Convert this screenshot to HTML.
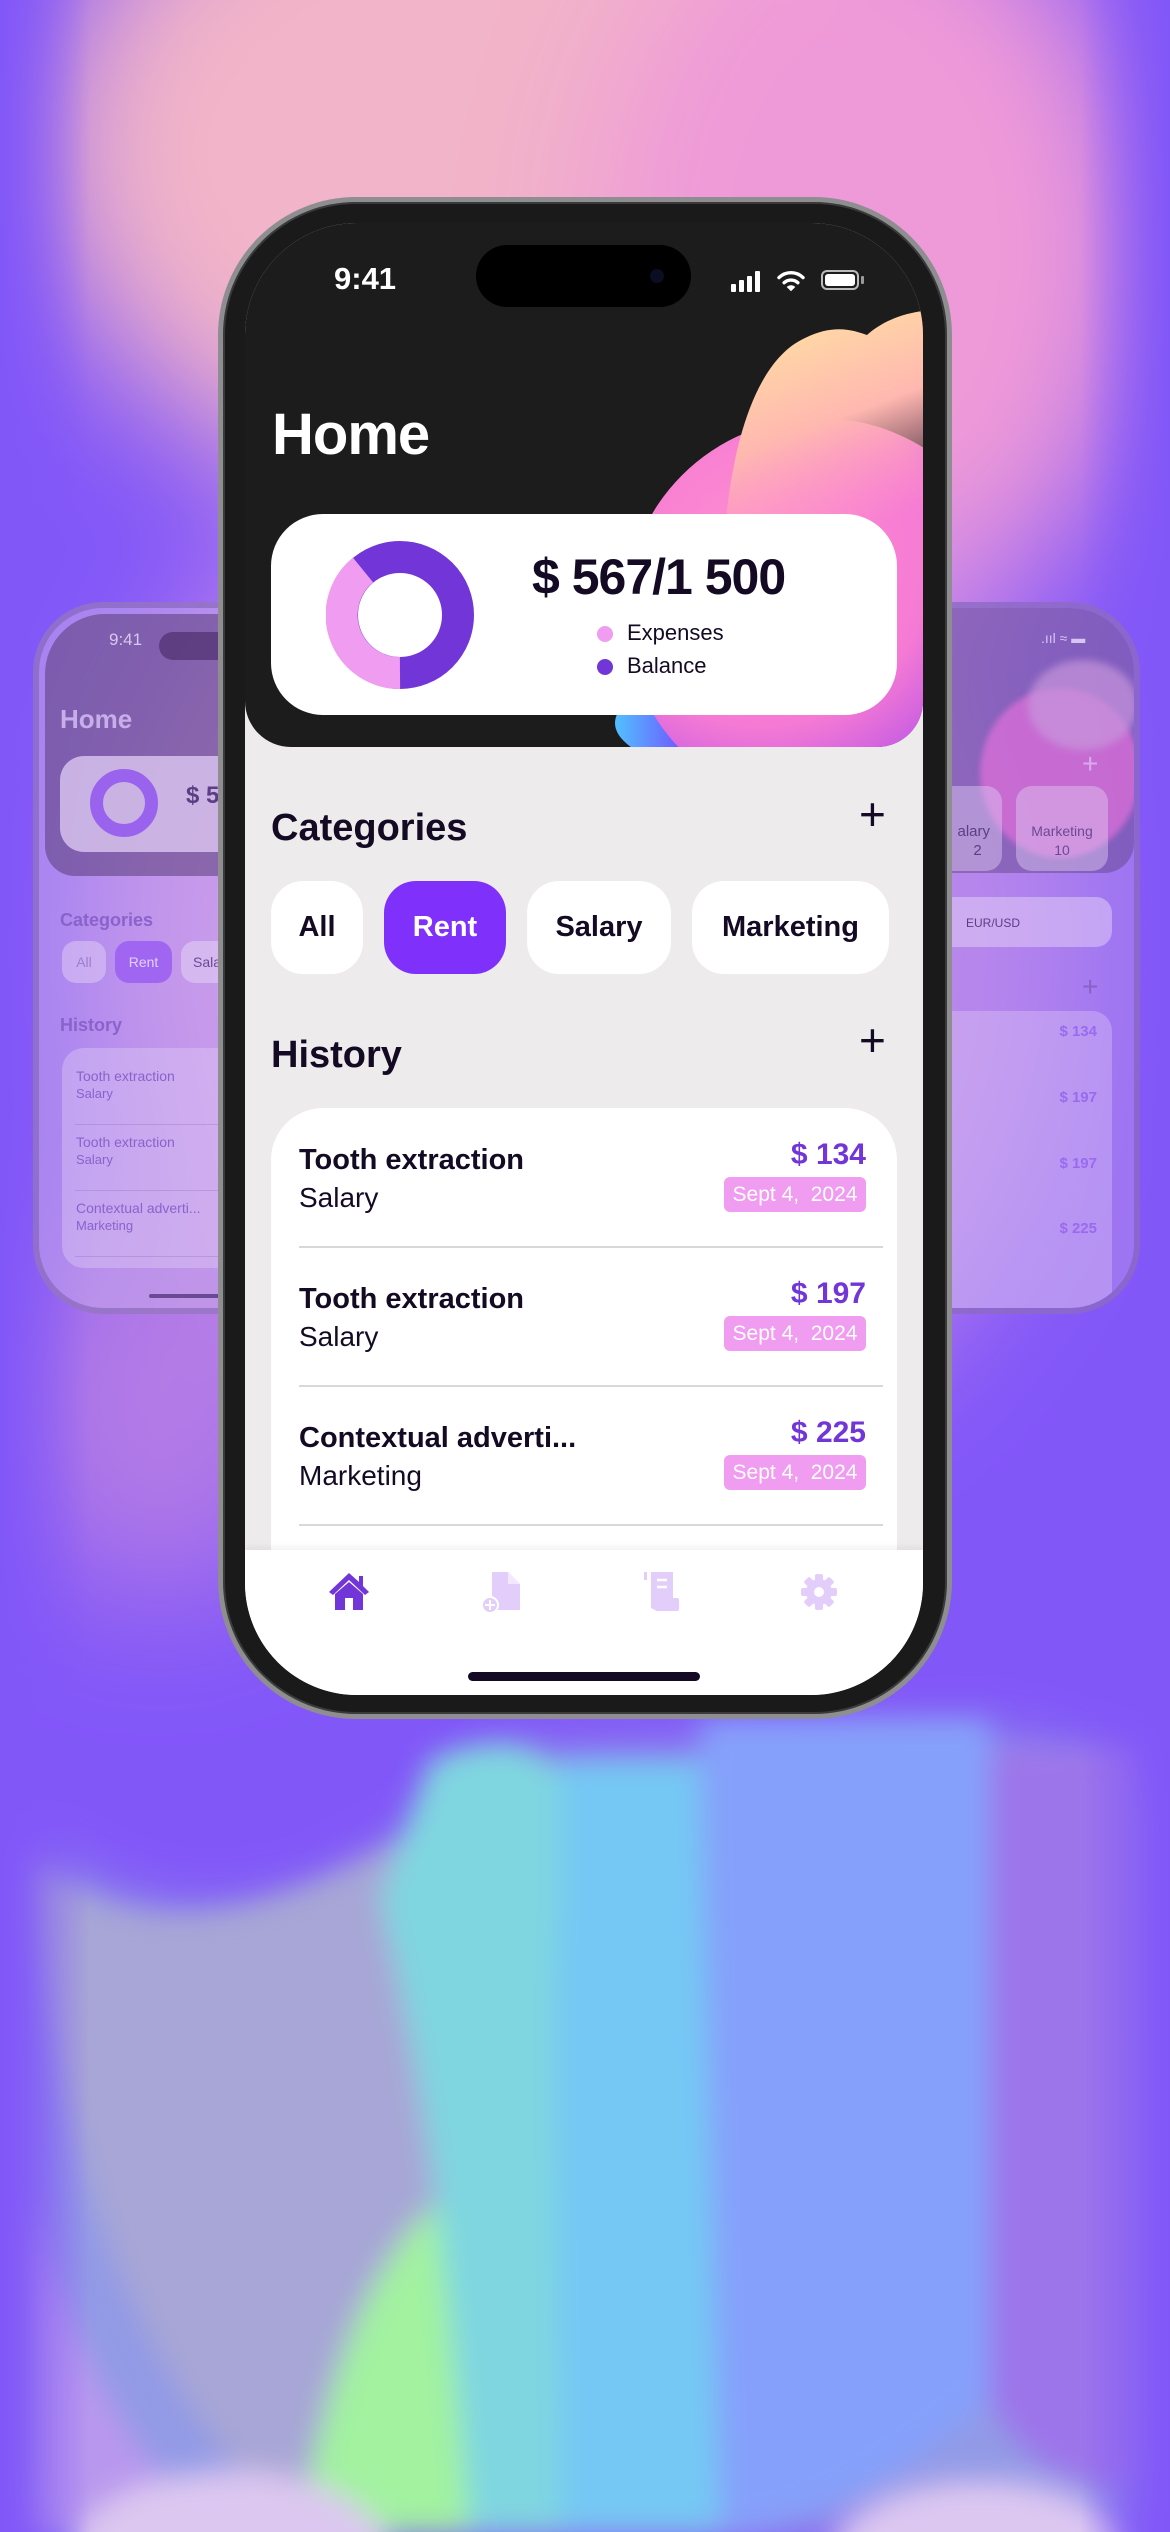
<!DOCTYPE html>
<html><head><meta charset="utf-8"><style>
*{margin:0;padding:0;box-sizing:border-box}
body{width:1170px;height:2532px;overflow:hidden;position:relative;font-family:"Liberation Sans",sans-serif;background:#8257f8}
.abs{position:absolute}
.t{color:#140a24}
</style></head><body>
<svg class="abs" style="left:0;top:0" width="1170" height="2532" viewBox="0 0 1170 2532">
<defs>
<filter id="b1" x="-50%" y="-50%" width="200%" height="200%"><feGaussianBlur stdDeviation="70"/></filter>
<filter id="b2" x="-50%" y="-50%" width="200%" height="200%"><feGaussianBlur stdDeviation="14"/></filter>
<filter id="b3" x="-50%" y="-50%" width="200%" height="200%"><feGaussianBlur stdDeviation="30"/></filter>
<linearGradient id="sideL" x1="0" x2="1"><stop offset="0" stop-color="#8257f8"/><stop offset="1" stop-color="#8257f8" stop-opacity="0"/></linearGradient>
<linearGradient id="sideR" x1="1" x2="0"><stop offset="0" stop-color="#8257f8"/><stop offset="1" stop-color="#8257f8" stop-opacity="0"/></linearGradient>
</defs>
<rect width="1170" height="2532" fill="#8257f8"/>
<g filter="url(#b1)">
<ellipse cx="560" cy="150" rx="520" ry="380" fill="#f2b4c8"/>
<ellipse cx="870" cy="250" rx="280" ry="380" fill="#ef9ad8"/>
<ellipse cx="585" cy="950" rx="480" ry="520" fill="#c98ae8"/>
<ellipse cx="160" cy="1400" rx="160" ry="200" fill="#b27ae6"/>
</g>
<g filter="url(#b3)">
<path d="M30 1850 C200 1980 380 1900 520 1760 L1000 1740 L1140 1780 L1140 2532 L30 2532Z" fill="#929ae6"/>
</g>
<g filter="url(#b2)">
<path d="M30 1860 C150 1960 300 1920 520 1760 L520 2532 L300 2532 C150 2400 60 2200 30 1860Z" fill="#a7a6d6"/>
<path d="M300 2532 C330 2350 380 2250 440 2200 L480 2532Z" fill="#a2f2a0"/>
<path d="M430 1760 C520 1720 560 1760 580 1800 L570 2532 L470 2532 C450 2300 430 2100 380 1900Z" fill="#7fd6e0"/>
<path d="M560 1760 L700 1760 L720 2532 L560 2532 C560 2300 550 2000 560 1900Z" fill="#74c8f4"/>
<path d="M700 1720 L990 1720 L990 2400 C900 2480 800 2532 720 2532Z" fill="#85a0fb"/>
<path d="M990 1750 L1140 1750 L1140 2480 C1080 2500 1020 2460 990 2400Z" fill="#9d74ea"/>
<path d="M30 2200 C80 2380 150 2480 230 2532 L30 2532Z" fill="#b898ee"/>
<ellipse cx="230" cy="2560" rx="160" ry="90" fill="#dcc7f0"/>
<ellipse cx="980" cy="2560" rx="150" ry="80" fill="#dcc7f0"/>
</g>
<rect x="0" y="0" width="90" height="2532" fill="url(#sideL)"/>
<rect x="1080" y="0" width="90" height="2532" fill="url(#sideR)"/>
</svg>

<!-- left side phone -->
<div class="abs" style="left:33px;top:602px;width:380px;height:712px;border-radius:70px;border:6px solid rgba(120,90,170,.5);background:rgba(200,170,235,.55);overflow:hidden">
 <div class="abs" style="left:6px;top:6px;right:6px;height:262px;background:rgba(90,60,120,.55);border-radius:60px 60px 30px 30px"></div>
 <div class="abs" style="left:70px;top:22px;font-size:17px;color:#d9c8ee">9:41</div>
 <div class="abs" style="left:120px;top:24px;width:120px;height:28px;border-radius:14px;background:rgba(70,40,100,.6)"></div>
 <div class="abs" style="left:21px;top:96px;font-size:26px;font-weight:bold;color:#c7aeea">Home</div>
 <div class="abs" style="left:21px;top:148px;width:320px;height:96px;border-radius:24px;background:rgba(225,205,245,.75)"></div>
 <div class="abs" style="left:51px;top:161px;width:68px;height:68px;border-radius:50%;border:13px solid #9a63ee"></div>
 <div class="abs" style="left:147px;top:174px;font-size:24px;font-weight:bold;color:#5b3e84">$ 5</div>
 <div class="abs" style="left:21px;top:302px;font-size:18px;font-weight:bold;color:#8a62cc">Categories</div>
 <div class="abs" style="left:23px;top:333px;width:44px;height:42px;border-radius:14px;background:rgba(225,205,245,.5);font-size:14px;color:#9b7fd0;text-align:center;line-height:42px">All</div>
 <div class="abs" style="left:76px;top:333px;width:57px;height:42px;border-radius:14px;background:#a066f2;font-size:14px;color:#e3d1fb;text-align:center;line-height:42px">Rent</div>
 <div class="abs" style="left:142px;top:333px;width:80px;height:42px;border-radius:14px;background:rgba(225,205,245,.6);font-size:14px;color:#6a4a94;line-height:42px;padding-left:12px">Salary</div>
 <div class="abs" style="left:21px;top:407px;font-size:18px;font-weight:bold;color:#8a62cc">History</div>
 <div class="abs" style="left:23px;top:440px;width:330px;height:220px;border-radius:22px;background:rgba(225,205,245,.4)"></div>
 <div class="abs" style="left:37px;top:460px;font-size:14px;color:#8a62cc;line-height:17px">Tooth extraction<br><span style="font-size:13px">Salary</span></div>
 <div class="abs" style="left:37px;top:526px;font-size:14px;color:#8a62cc;line-height:17px">Tooth extraction<br><span style="font-size:13px">Salary</span></div>
 <div class="abs" style="left:37px;top:592px;font-size:14px;color:#8a62cc;line-height:17px">Contextual adverti...<br><span style="font-size:13px">Marketing</span></div>
 <div class="abs" style="left:36px;top:516px;width:300px;height:1px;background:rgba(140,100,200,.3)"></div>
 <div class="abs" style="left:36px;top:582px;width:300px;height:1px;background:rgba(140,100,200,.3)"></div>
 <div class="abs" style="left:36px;top:648px;width:300px;height:1px;background:rgba(140,100,200,.3)"></div>
 <div class="abs" style="left:110px;top:686px;width:120px;height:4px;border-radius:2px;background:#6a4a94"></div>
</div>

<!-- right side phone -->
<div class="abs" style="left:760px;top:602px;width:380px;height:712px;border-radius:70px;border:6px solid rgba(120,90,170,.5);background:rgba(175,135,238,.6);overflow:hidden">
 <div class="abs" style="left:0;top:0;right:0;height:265px;background:rgba(100,70,140,.5);border-radius:64px 64px 30px 30px"></div>
 <div class="abs" style="left:214px;top:80px;width:160px;height:170px;border-radius:50%;background:rgba(215,110,215,.8);filter:blur(3px)"></div>
 <div class="abs" style="left:262px;top:52px;width:110px;height:90px;border-radius:50%;background:rgba(200,150,220,.7);filter:blur(4px)"></div>
 <div class="abs" style="left:275px;top:22px;font-size:14px;color:#d6c6f2">.ııl ≈ ▬</div>
 <div class="abs" style="left:316px;top:140px;font-size:28px;font-weight:200;color:rgba(230,210,250,.6)">+</div>
 <div class="abs" style="left:150px;top:178px;width:86px;height:85px;border-radius:16px;background:rgba(225,205,245,.45);font-size:15px;color:#5b3e84;text-align:right;padding:36px 12px 0 0;line-height:19px">alary<br>2&nbsp;&nbsp;</div>
 <div class="abs" style="left:250px;top:178px;width:92px;height:85px;border-radius:16px;background:rgba(225,205,245,.45);font-size:14px;color:#6a4a94;text-align:center;padding-top:36px;line-height:19px">Marketing<br>10</div>
 <div class="abs" style="left:0px;top:289px;width:346px;height:50px;border-radius:16px;background:rgba(230,210,248,.5);font-size:12px;color:#5b3e84;padding:19px 0 0 200px">EUR/USD</div>
 <div class="abs" style="left:316px;top:363px;font-size:28px;font-weight:200;color:rgba(120,80,170,.6)">+</div>
 <div class="abs" style="left:0px;top:403px;width:346px;height:320px;border-radius:20px;background:rgba(225,205,245,.35)"></div>
 <div class="abs" style="left:240px;top:414px;width:91px;text-align:right;font-size:15px;font-weight:bold;color:#9a6aee;line-height:20px">$ 134</div>
 <div class="abs" style="left:240px;top:480px;width:91px;text-align:right;font-size:15px;font-weight:bold;color:#9a6aee;line-height:20px">$ 197</div>
 <div class="abs" style="left:240px;top:546px;width:91px;text-align:right;font-size:15px;font-weight:bold;color:#9a6aee;line-height:20px">$ 197</div>
 <div class="abs" style="left:240px;top:611px;width:91px;text-align:right;font-size:15px;font-weight:bold;color:#9a6aee;line-height:20px">$ 225</div>
 <div class="abs" style="left:0px;top:686px;width:160px;height:4px;border-radius:2px;background:#6a4a94"></div>
</div>

<!-- main phone -->
<div class="abs" style="left:218px;top:197px;width:734px;height:1522px;border-radius:138px;background:#1a1a1a;border:5px solid #8e8e90;box-shadow:0 0 0 2px #3a3a3c inset"></div>
<div class="abs" style="left:245px;top:223px;width:678px;height:1472px;border-radius:112px;background:#edebec;overflow:hidden">
 <!-- header -->
 <div class="abs" style="left:0;top:0;width:678px;height:524px;background:#1c1c1c;border-radius:0 0 46px 46px;overflow:hidden">
  <svg class="abs" style="left:0;top:0" width="678" height="524">
   <defs>
    <radialGradient id="pk" cx="0.35" cy="0.35" r="0.8"><stop offset="0" stop-color="#ff8ed0"/><stop offset="0.55" stop-color="#f57ad4"/><stop offset="1" stop-color="#9a40f0"/></radialGradient>
    <linearGradient id="yl" x1="0" y1="0" x2="0.3" y2="1"><stop offset="0" stop-color="#ffe7a0"/><stop offset="0.55" stop-color="#ffb8b0"/><stop offset="1" stop-color="#ff9cc4" stop-opacity="0"/></linearGradient>
    <linearGradient id="bt" x1="0" y1="0" x2="1" y2="0"><stop offset="0" stop-color="#52c0ff"/><stop offset="0.25" stop-color="#7a2cff"/><stop offset="1" stop-color="#b052e8"/></linearGradient>
   </defs>
   <ellipse cx="560" cy="500" rx="190" ry="60" fill="url(#bt)"/>
   <circle cx="575" cy="390" r="195" fill="url(#pk)"/>
   <path d="M478 340 C482 240 505 140 560 115 C590 100 610 108 622 112 C640 96 662 90 678 88 L678 330 C620 300 540 310 478 340Z" fill="url(#yl)"/>
  </svg>
 </div>
 <div class="abs" style="left:89px;top:38px;font-size:31px;color:#fff;font-weight:600">9:41</div>
 <div class="abs" style="left:231px;top:22px;width:215px;height:62px;border-radius:31px;background:#000"></div>
 <div class="abs" style="left:405px;top:46px;width:14px;height:14px;border-radius:50%;background:#0b0d22"></div>
 <div class="abs" style="left:486px;top:61px;width:5px;height:8px;background:#fff;border-radius:1px"></div>
 <div class="abs" style="left:494px;top:57px;width:5px;height:12px;background:#fff;border-radius:1px"></div>
 <div class="abs" style="left:502px;top:53px;width:5px;height:16px;background:#fff;border-radius:1px"></div>
 <div class="abs" style="left:510px;top:48px;width:5px;height:21px;background:#fff;border-radius:1px"></div>
 <svg class="abs" style="left:532px;top:46px" width="28" height="24" viewBox="0 0 32 28"><path d="M2 10 A20 20 0 0 1 30 10" stroke="#fff" stroke-width="4" fill="none" stroke-linecap="round"/><path d="M8 16 A12 12 0 0 1 24 16" stroke="#fff" stroke-width="4" fill="none" stroke-linecap="round"/><path d="M16 26 L11 21 A7 7 0 0 1 21 21Z" fill="#fff"/></svg>
 <div class="abs" style="left:576px;top:47px;width:38px;height:20px;border-radius:6px;border:2px solid #bbb;padding:2px"><div style="width:100%;height:100%;background:#fff;border-radius:3px"></div></div>
 <div class="abs" style="left:616px;top:53px;width:3px;height:8px;background:#999;border-radius:1px"></div>

 <div class="abs" style="left:27px;top:178px;font-size:58px;font-weight:bold;color:#fff;letter-spacing:-1px">Home</div>
 <div class="abs" style="left:26px;top:291px;width:626px;height:201px;border-radius:52px;background:#fff"></div>
 <svg class="abs" style="left:81px;top:318px" width="148" height="148" viewBox="0 0 148 148">
  <circle cx="74" cy="74" r="58" fill="none" stroke="#7236d8" stroke-width="32"/>
  <path d="M74 132 A58 58 0 0 1 37 29" fill="none" stroke="#f09cf0" stroke-width="32"/>
 </svg>
 <div class="abs t" style="left:287px;top:325px;font-size:50px;font-weight:bold;letter-spacing:-1px">$ 567/1 500</div>
 <div class="abs" style="left:352px;top:403px;width:16px;height:16px;border-radius:50%;background:#f09cf0"></div>
 <div class="abs t" style="left:382px;top:397px;font-size:22px">Expenses</div>
 <div class="abs" style="left:352px;top:436px;width:16px;height:16px;border-radius:50%;background:#7236d8"></div>
 <div class="abs t" style="left:382px;top:430px;font-size:22px">Balance</div>

 <div class="abs t" style="left:26px;top:584px;font-size:38px;font-weight:bold">Categories</div>
 <div class="abs t" style="left:614px;top:568px;font-size:46px;font-weight:300;line-height:46px">+</div>
 <div class="abs t" style="left:26px;top:658px;width:92px;height:93px;border-radius:32px;background:#fff;font-size:29px;font-weight:600;text-align:center;line-height:93px">All</div>
 <div class="abs" style="left:139px;top:658px;width:122px;height:93px;border-radius:32px;background:#7f30fb;color:#fff;font-size:29px;font-weight:600;text-align:center;line-height:93px">Rent</div>
 <div class="abs t" style="left:282px;top:658px;width:144px;height:93px;border-radius:32px;background:#fff;font-size:29px;font-weight:600;text-align:center;line-height:93px">Salary</div>
 <div class="abs t" style="left:447px;top:658px;width:197px;height:93px;border-radius:32px;background:#fff;font-size:29px;font-weight:600;text-align:center;line-height:93px">Marketing</div>

 <div class="abs t" style="left:26px;top:811px;font-size:38px;font-weight:bold">History</div>
 <div class="abs t" style="left:614px;top:794px;font-size:46px;font-weight:300;line-height:46px">+</div>

 <div class="abs" style="left:26px;top:885px;width:626px;height:520px;border-radius:52px;background:#fff"></div>
 <div class="abs t" style="left:54px;top:920px;font-size:29px;font-weight:bold;line-height:34px">Tooth extraction</div>
 <div class="abs t" style="left:54px;top:958px;font-size:28px;line-height:34px">Salary</div>
 <div class="abs" style="left:421px;top:915px;width:200px;text-align:right;font-size:30px;font-weight:bold;color:#7236d8">$ 134</div>
 <div class="abs" style="left:479px;top:954px;width:142px;height:35px;border-radius:6px;background:#f09cf0;color:#fff;font-size:21px;text-align:center;line-height:35px">Sept 4, &nbsp;2024</div>
 <div class="abs" style="left:54px;top:1023px;width:584px;height:2px;background:#d8d8d8"></div>

 <div class="abs t" style="left:54px;top:1059px;font-size:29px;font-weight:bold;line-height:34px">Tooth extraction</div>
 <div class="abs t" style="left:54px;top:1097px;font-size:28px;line-height:34px">Salary</div>
 <div class="abs" style="left:421px;top:1054px;width:200px;text-align:right;font-size:30px;font-weight:bold;color:#7236d8">$ 197</div>
 <div class="abs" style="left:479px;top:1093px;width:142px;height:35px;border-radius:6px;background:#f09cf0;color:#fff;font-size:21px;text-align:center;line-height:35px">Sept 4, &nbsp;2024</div>
 <div class="abs" style="left:54px;top:1162px;width:584px;height:2px;background:#d8d8d8"></div>

 <div class="abs t" style="left:54px;top:1198px;font-size:29px;font-weight:bold;line-height:34px">Contextual adverti...</div>
 <div class="abs t" style="left:54px;top:1236px;font-size:28px;line-height:34px">Marketing</div>
 <div class="abs" style="left:421px;top:1193px;width:200px;text-align:right;font-size:30px;font-weight:bold;color:#7236d8">$ 225</div>
 <div class="abs" style="left:479px;top:1232px;width:142px;height:35px;border-radius:6px;background:#f09cf0;color:#fff;font-size:21px;text-align:center;line-height:35px">Sept 4, &nbsp;2024</div>
 <div class="abs" style="left:54px;top:1301px;width:584px;height:2px;background:#d8d8d8"></div>

 <div class="abs" style="left:0;top:1327px;width:678px;height:145px;background:#fff;box-shadow:0 -3px 6px rgba(0,0,0,.06)"></div>
 <svg class="abs" style="left:82px;top:1347px" width="44" height="42" viewBox="0 0 44 42"><path d="M22 3 L2 22 L6 25 L22 10 L38 25 L42 22 L36 16 L36 6 L32 6 L32 12Z" fill="#7236d8"/><path d="M8 24 L22 12 L36 24 L36 40 L26 40 L26 28 L18 28 L18 40 L8 40Z" fill="#7236d8"/></svg>
 <svg class="abs" style="left:237px;top:1347px" width="40" height="44" viewBox="0 0 40 44"><path d="M10 2 L26 2 L38 14 L38 40 L10 40Z" fill="#e3cdfb"/><path d="M26 2 L26 14 L38 14Z" fill="#f3e8fd"/><circle cx="8" cy="35" r="8" fill="#e3cdfb" stroke="#fff" stroke-width="2"/><path d="M8 30 V40 M3 35 H13" stroke="#fff" stroke-width="2"/></svg>
 <svg class="abs" style="left:398px;top:1347px" width="38" height="42" viewBox="0 0 38 42"><rect x="1" y="2" width="3" height="8" fill="#e3cdfb"/><path d="M8 2 L30 2 L30 30 L12 30 L12 40 L8 38Z" fill="#e3cdfb"/><rect x="12" y="28" width="24" height="13" rx="2" fill="#e3cdfb"/><path d="M14 10 H24 M14 17 H24" stroke="#fff" stroke-width="2.5"/></svg>
 <svg class="abs" style="left:555px;top:1350px" width="38" height="38" viewBox="0 0 38 38"><g fill="#e3cdfb"><circle cx="19" cy="19" r="13"/><rect x="15" y="1" width="8" height="36" rx="2"/><rect x="15" y="1" width="8" height="36" rx="2" transform="rotate(45 19 19)"/><rect x="15" y="1" width="8" height="36" rx="2" transform="rotate(90 19 19)"/><rect x="15" y="1" width="8" height="36" rx="2" transform="rotate(135 19 19)"/></g><circle cx="19" cy="19" r="5" fill="#fff"/></svg>
 <div class="abs" style="left:223px;top:1449px;width:232px;height:9px;border-radius:5px;background:#140a24"></div>
</div>
</body></html>
